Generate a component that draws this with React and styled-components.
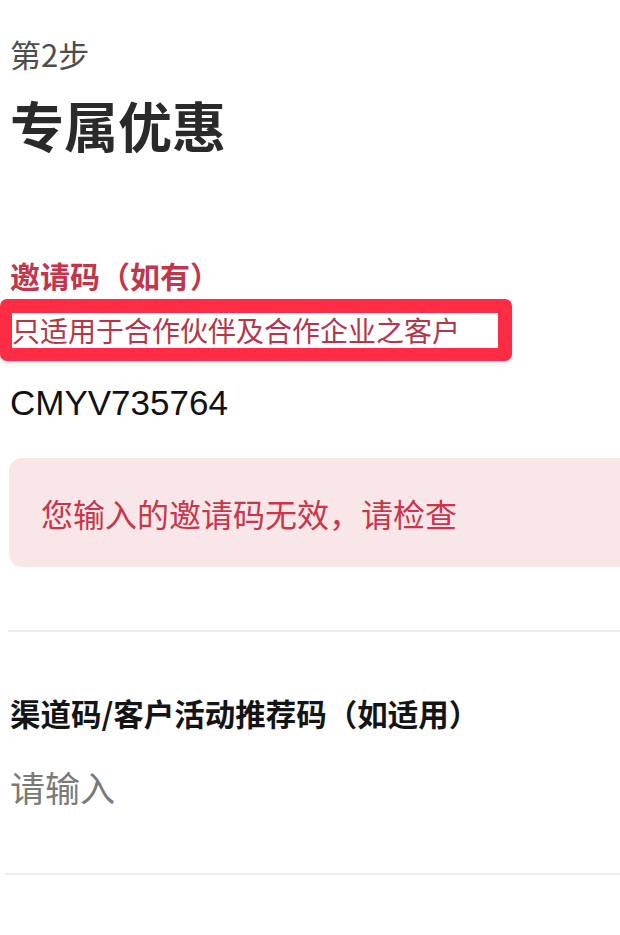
import React from "react";
import styled, {createGlobalStyle} from "styled-components";

const GlobalStyle = createGlobalStyle`
  html, body {
    margin: 0;
    padding: 0;
    background: #ffffff;
  }
  body {
    font-family: "Noto Sans CJK SC", "Noto Sans", sans-serif;
    overflow-x: hidden;
  }
`;

const Page = styled.div`
  display: flex;
  flex-direction: column;
  align-items: flex-start;
  padding: 34px 0 40px 10px;
  overflow: hidden;
`;

const Step = styled.div`
  font-size: 31px;
  line-height: 40px;
  color: #4d4d4d;
`;

const Title = styled.h1`
  margin: 19px 0 0;
  font-size: 54px;
  line-height: 64px;
  font-weight: 700;
  color: #2a2a2a;
`;

const FieldLabel = styled.div`
  margin-top: ${(p) => p.$gap}px;
  font-size: ${(p) => p.$size || 30}px;
  line-height: 40px;
  font-weight: 700;
  color: ${(p) => (p.$tone === "error" ? "#c2364b" : "#141414")};
`;

const HintMark = styled.div`
  margin: 4px 0 0 -10px;
  border-style: solid;
  border-color: #ff2c45;
  border-width: 14px 14px 13px 12px;
  border-radius: 7px;
  background: #ffffff;
  box-shadow: 0 2px 4px rgba(0, 0, 0, 0.12);
`;

const HintText = styled.div`
  padding: 0 38px 0 0;
  font-size: 28px;
  line-height: 35px;
  color: #b53549;
`;

const CodeInput = styled.input`
  margin: 20px 0 0;
  padding: 0;
  border: none;
  outline: none;
  background: transparent;
  width: 400px;
  height: 44px;
  font-family: "Liberation Sans", Arial, sans-serif;
  font-size: 35px;
  color: #111111;
`;

const ErrorBanner = styled.div`
  display: flex;
  align-items: center;
  box-sizing: border-box;
  margin: 33px 0 0 -1px;
  width: calc(100% + 40px);
  height: 109px;
  padding-left: 32px;
  border-radius: 13px;
  background: #f9e6e9;
  font-size: 32px;
  color: #c8364b;
`;

const Divider = styled.hr`
  align-self: stretch;
  margin: ${(p) => p.$gap}px 0 0 ${(p) => p.$inset}px;
  border: none;
  height: 2px;
  background: #ececec;
`;

const PlainInput = styled.input`
  margin: 30px 0 0;
  padding: 0;
  border: none;
  outline: none;
  background: transparent;
  width: 400px;
  height: 46px;
  font-family: "Noto Sans CJK SC", "Noto Sans", sans-serif;
  font-size: 35px;
  color: #222222;

  &::placeholder {
    color: #7a7a7a;
  }
`;

export default function App() {
  return (
    <>
      <GlobalStyle />
      <Page>
        <Step>第2步</Step>
        <Title>专属优惠</Title>

        <FieldLabel $tone="error" $gap={98}>
          邀请码（如有）
        </FieldLabel>
        <HintMark>
          <HintText>只适用于合作伙伴及合作企业之客户</HintText>
        </HintMark>
        <CodeInput defaultValue="CMYV735764" />
        <ErrorBanner>您输入的邀请码无效，请检查</ErrorBanner>
        <Divider $gap={63} $inset={-2} />

        <FieldLabel $gap={61} $size={30.5}>
          渠道码/客户活动推荐码（如适用）
        </FieldLabel>
        <PlainInput placeholder="请输入" />
        <Divider $gap={64} $inset={-5} />
      </Page>
    </>
  );
}
